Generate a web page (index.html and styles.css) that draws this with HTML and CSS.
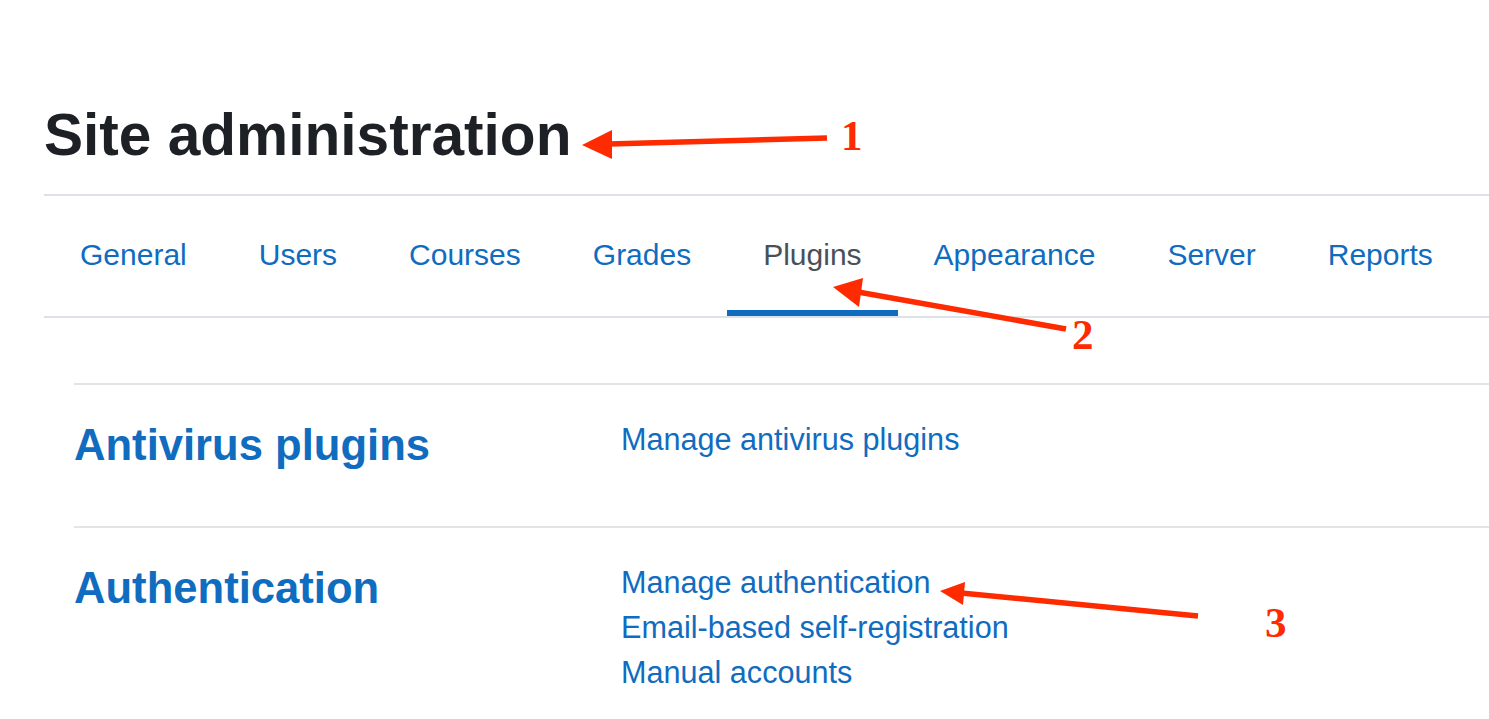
FILE: index.html
```html
<!DOCTYPE html>
<html lang="en">
<head>
<meta charset="utf-8">
<title>Site administration</title>
<link rel="stylesheet" href="styles.css">
</head>
<body>
<div class="page">
  <h1 class="title">Site administration</h1>
  <nav class="tabs">
    <ul class="tab-list">
      <li><a class="tab" href="#">General</a></li>
      <li><a class="tab" href="#">Users</a></li>
      <li><a class="tab" href="#">Courses</a></li>
      <li><a class="tab" href="#">Grades</a></li>
      <li><a class="tab tab-active" href="#">Plugins</a></li>
      <li><a class="tab" href="#">Appearance</a></li>
      <li><a class="tab" href="#">Server</a></li>
      <li><a class="tab" href="#">Reports</a></li>
    </ul>
  </nav>
  <div class="sections">
    <section class="section section-first">
      <h2 class="section-title"><a href="#">Antivirus plugins</a></h2>
      <ul class="links">
        <li><a href="#">Manage antivirus plugins</a></li>
      </ul>
    </section>
    <section class="section">
      <h2 class="section-title"><a href="#">Authentication</a></h2>
      <ul class="links">
        <li><a href="#">Manage authentication</a></li>
        <li><a href="#">Email-based self-registration</a></li>
        <li><a href="#">Manual accounts</a></li>
      </ul>
    </section>
  </div>
</div>
<svg class="annotations" width="1489" height="719" viewBox="0 0 1489 719">
  <g class="arrow">
    <line x1="609" y1="144" x2="827" y2="138" />
    <polygon points="582,145 612,130 612,159" />
  </g>
  <g class="arrow">
    <line x1="858" y1="292" x2="1066" y2="329" />
    <polygon points="833,287 863,278 859,307" />
  </g>
  <g class="arrow">
    <line x1="961" y1="593" x2="1198" y2="616" />
    <polygon points="940,591 965,582 963,605" />
  </g>
  <text class="num" x="841" y="150">1</text>
  <text class="num" x="1072" y="349">2</text>
  <text class="num" x="1265" y="637">3</text>
</svg>
</body>
</html>
```

FILE: styles.css
```css
html, body {
  margin: 0;
  padding: 0;
  background: #ffffff;
}

body {
  font-family: "Liberation Sans", Arial, Helvetica, sans-serif;
  width: 1489px;
  height: 719px;
  overflow: hidden;
  position: relative;
}

a {
  text-decoration: none;
}

.page {
  padding: 100px 0 0 44px;
}

.title {
  margin: 0 0 24px 0;
  font-size: 58.6px;
  line-height: 70px;
  font-weight: 700;
  color: #1d2125;
}

.tabs {
  border-top: 2px solid #dee2e6;
  border-bottom: 2px solid #dee2e6;
}

.tab-list {
  display: flex;
  list-style: none;
  margin: 0;
  padding: 0;
}

.tab {
  display: block;
  padding: 41px 36px 37px;
  font-size: 30px;
  line-height: 36px;
  color: #0f6cbf;
  border-bottom: 6px solid transparent;
}

.tab-active {
  color: #495057;
  border-bottom-color: #0f6cbf;
}

.sections {
  margin: 65px 0 0 30px;
}

.section {
  display: grid;
  grid-template-columns: 547px 1fr;
  border-top: 2px solid #e4e4e4;
  padding: 32px 0 55px;
}

.section-title {
  margin: 2px 0 0 0;
  font-size: 43.6px;
  line-height: 52px;
  font-weight: 700;
}

.section-title a {
  color: #0f6cbf;
}

.links {
  list-style: none;
  margin: 0;
  padding: 0;
  display: flex;
  flex-direction: column;
}

.links a {
  display: block;
  font-size: 30.6px;
  line-height: 45px;
  color: #0f6cbf;
}

.annotations {
  position: absolute;
  top: 0;
  left: 0;
  pointer-events: none;
}

.arrow line {
  stroke: #fe2a00;
  stroke-width: 5.5;
}

.arrow polygon {
  fill: #fe2a00;
}

.num {
  font-family: "Liberation Serif", "Times New Roman", serif;
  font-weight: 700;
  font-size: 43px;
  fill: #fe2a00;
}
```
